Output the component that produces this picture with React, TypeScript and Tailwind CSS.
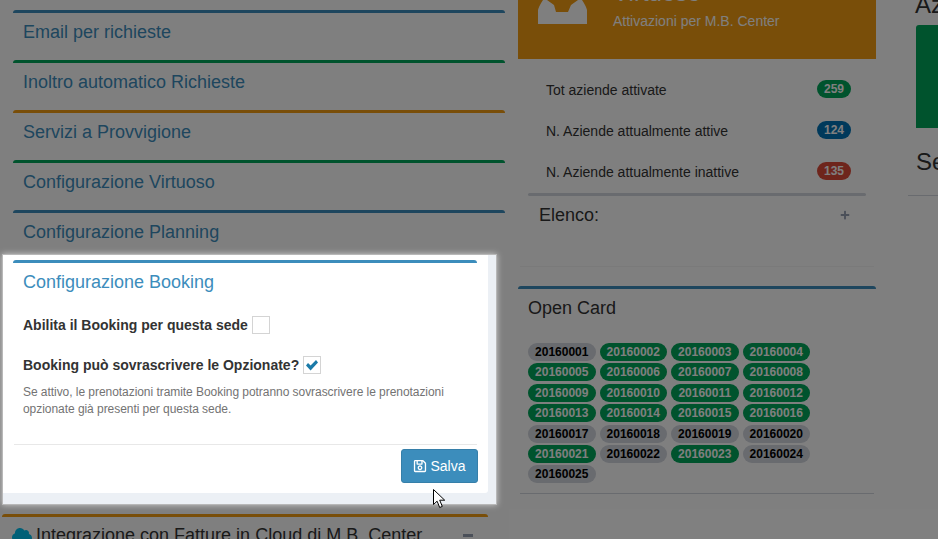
import { FaCloud, FaPlus, FaRegSave } from 'react-icons/fa';

const FONT = "font-['Liberation_Sans',Arial,sans-serif]";

const sections = [
  { title: 'Email per richieste', line: 'border-[#3c8dbc]' },
  { title: 'Inoltro automatico Richieste', line: 'border-[#00a65a]' },
  { title: 'Servizi a Provvigione', line: 'border-[#f39c12]' },
  { title: 'Configurazione Virtuoso', line: 'border-[#00a65a]' },
  { title: 'Configurazione Planning', line: 'border-[#3c8dbc]' },
];

const stats = [
  { label: 'Tot aziende attivate', value: 259, color: 'bg-[#00a65a]' },
  { label: 'N. Aziende attualmente attive', value: 124, color: 'bg-[#0073b7]' },
  { label: 'N. Aziende attualmente inattive', value: 135, color: 'bg-[#dd4b39]' },
];

const activeCards = [2, 3, 4, 5, 6, 7, 8, 9, 10, 11, 12, 13, 14, 15, 16, 21, 23];
const cards = Array.from({ length: 25 }, (_, i) => i + 1);

function SectionHeader({ title, line }: { title: string; line: string }) {
  return (
    <div className={`h-[50px] mx-[13px] border-t-[3px] rounded-t-[3px] ${line} pl-[10px] pt-[10px]`}>
      <h3 className="text-[18px] leading-[18px] text-[#3c8dbc]">{title}</h3>
    </div>
  );
}

export default function App() {
  return (
    <div className={`relative h-[539px] w-[938px] overflow-hidden bg-white text-[#333] ${FONT}`}>
      <div className="flex h-full">
        {/* Left column */}
        <div className="w-[518px] shrink-0 pt-[10px]">
          {sections.map(s => (
            <SectionHeader key={s.title} {...s} />
          ))}
          {/* Highlighted step */}
          <div className="relative z-20 -mt-[6px] ml-[2px] h-[251px] w-[495px] border border-[#b8b8b8] bg-[#ecf0f5] shadow-[0_0_6px_rgba(255,255,255,0.6)]">
            <div className="h-[238px] w-[485px] rounded-br-[3px] bg-white">
              <div className="pl-[10px] pt-[5px]">
                <div className="mr-[11px] h-[50px] border-t-[3px] border-[#3c8dbc] rounded-t-[3px] pl-[10px] pt-[10px]">
                  <h3 className="text-[18px] leading-[18px] text-[#3c8dbc]">Configurazione Booking</h3>
                </div>
              </div>
              <div className="pl-[20px]">
                <label className="mt-[6px] flex h-[18px] items-center gap-[4px] text-[14px] font-bold text-[#333]">
                  Abilita il Booking per questa sede
                  <span className="h-[18px] w-[18px] border border-[#d4d4d4] bg-white" />
                </label>
                <label className="mt-[22px] flex h-[18px] items-center gap-[4px] text-[14px] font-bold text-[#333]">
                  Booking può sovrascrivere le Opzionate?
                  <span className="flex h-[18px] w-[18px] items-center justify-center border border-[#d4d4d4] bg-white">
                    <svg viewBox="0 0 12 12" className="h-[12px] w-[12px]">
                      <path d="M0 6.5 2 4l2.6 2.6L10 1l2 2.4L4.6 11.5z" fill="#1a7aa8" />
                    </svg>
                  </span>
                </label>
                <p className="mt-[10px] w-[440px] text-[12px] leading-[17px] tracking-[-0.05px] text-[#737373]">
                  Se attivo, le prenotazioni tramite Booking potranno sovrascrivere le prenotazioni opzionate già presenti per questa sede.
                </p>
              </div>
              <div className="mx-[11px] mt-[26px] flex justify-end border-t border-[#e8e8e8] pt-[4px]">
                <button className="-mr-[1px] flex h-[34px] w-[77px] items-center justify-center gap-[3px] rounded-[3px] border border-[#367fa9] bg-[#3c8dbc] text-[14px] text-white">
                  <FaRegSave className="h-[14px] w-[14px]" />
                  Salva
                </button>
              </div>
            </div>
          </div>
          <div className="ml-[2px] mt-[9px] w-[486px] border-t-[3px] border-[#f39c12] rounded-t-[3px] pl-[10px] pr-[15px] pt-[6px]">
            <div className="flex items-center text-[18px] leading-[24px]">
              <FaCloud className="mr-[4px] h-[20px] w-[20px] text-[#00c0ef]" />
              Integrazione con Fatture in Cloud di M.B. Center
              <span className="ml-auto h-[3px] w-[10px] bg-[#97a0b3]" />
            </div>
          </div>
        </div>

        {/* Middle column */}
        <div className="w-[358px] shrink-0">
          <div className="flex h-[59px] overflow-hidden bg-[#f39c12] pl-[20px] text-white">
            <svg viewBox="0 0 49 24" className="h-[24px] w-[49px] shrink-0" fill="#fff">
              <path d="M0 24V10Q1 6 5 0h4l7 5 2 7h12l3-7 7-5h4q4 6 5 10v14z" />
            </svg>
            <div className="ml-[26px]">
              <div className="-mt-[22px] text-[24px] leading-[30px]">Virtuoso</div>
              <div className="mt-[3px] text-[14px] leading-[20px]">Attivazioni per M.B. Center</div>
            </div>
          </div>
          <div className="pt-[21px]">
            {stats.map(s => (
              <div key={s.label} className="mb-[23px] ml-[28px] mr-[25px] flex h-[18px] items-center justify-between">
                <span className="pt-[2px] text-[14px]">{s.label}</span>
                <span className={`h-[18px] w-[34px] rounded-[9px] text-center text-[12px] font-bold leading-[18px] text-white ${s.color}`}>
                  {s.value}
                </span>
              </div>
            ))}
          </div>
          <div className="mx-[10px] -mt-[10px] h-[3px] rounded-[2px] bg-[#d2d6de]" />
          <div className="mx-[2px] h-[71px] border-b border-[#f4f4f4] px-[19px] pt-[8px]">
            <div className="flex items-center justify-between text-[18px] leading-[22px]">
              Elenco:
              <FaPlus className="mr-[5px] h-[10px] w-[10px] text-[#97a0b3]" />
            </div>
          </div>
          <div className="mt-[19px] border-t-[3px] border-[#3c8dbc] rounded-t-[3px] pt-[10px]">
            <h3 className="pl-[10px] text-[18px] leading-[18px]">Open Card</h3>
            <div className="mx-[2px] mt-[26px] h-[151px] border-b border-[#d2d6de] pl-[8px]">
              <div className="w-[300px] leading-[20.4px]">
                {cards.map(n => (
                  <span
                    key={n}
                    className={`mr-[4px] inline-block h-[18px] w-[67.5px] rounded-[9px] text-center text-[12px] font-bold leading-[18px] align-top ${
                      activeCards.includes(n) ? 'bg-[#00a65a] text-white' : 'bg-[#d2d6de] text-black'
                    }`}
                  >
                    {20160000 + n}
                  </span>
                ))}
              </div>
            </div>
          </div>
        </div>

        {/* Right column */}
        <div className="ml-[32px] flex-1">
          <div className="-mt-[10px] pl-[7px] text-[24px] leading-[30px]">Az</div>
          <div className="ml-[8px] mt-[5px] flex h-[103px] items-center justify-end rounded-tl-[3px] bg-[#00a65a]">
            <div className="h-[55px] w-[3px] bg-white" />
          </div>
          <div className="pl-[8px] pt-[20px] text-[24px] leading-[27px]">Se</div>
          <div className="mt-[20px] border-b border-[#d2d6de]" />
        </div>
      </div>

      {/* Tour overlay */}
      <div className="absolute inset-0 z-10 bg-black/50" />

      {/* Mouse pointer */}
      <svg viewBox="0 0 13 20" className="absolute left-[433px] top-[489px] z-30 h-[20px] w-[13px]">
        <path d="M.5.5v15l3.6-3.3 2.6 6.3 2.6-1.1-2.6-6.2h5z" fill="#fff" stroke="#000" strokeWidth="1" />
      </svg>
    </div>
  );
}
